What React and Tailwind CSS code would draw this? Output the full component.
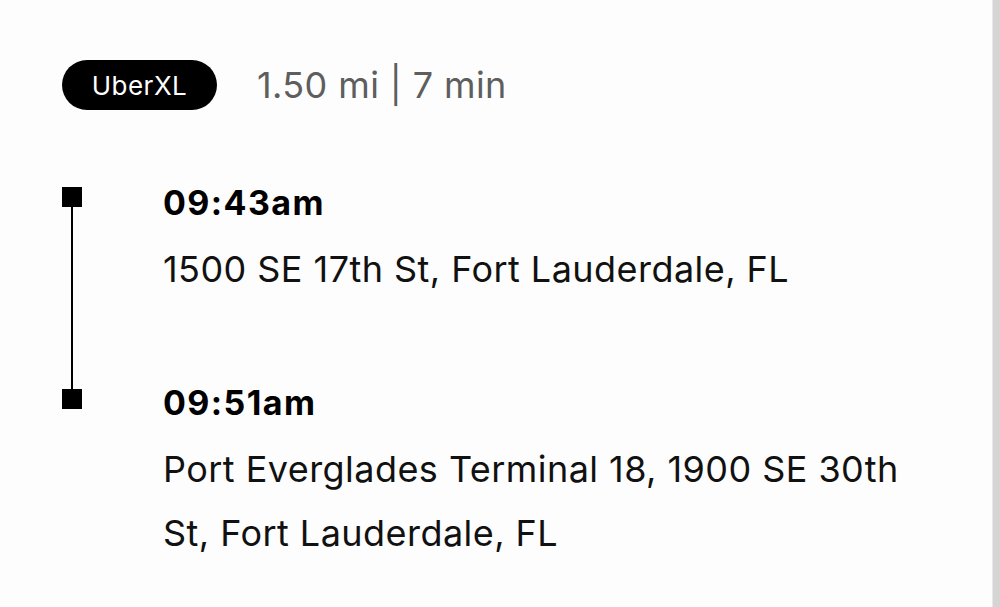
const stops = [
  { time: '09:43am', address: '1500 SE 17th St, Fort Lauderdale, FL' },
  { time: '09:51am', address: 'Port Everglades Terminal 18, 1900 SE 30th St, Fort Lauderdale, FL' },
];

const App = () => {
  return (
    <div className="flex h-[607px] w-[1000px] bg-[#fdfdfd] font-['Inter',sans-serif] overflow-hidden">
      <div className="flex-1 pl-[62px] pt-[60px]">
        {/* ride type + trip length */}
        <div className="flex h-[50px] items-center gap-[40px]">
          <span className="flex h-[50px] w-[155px] items-center justify-center rounded-full bg-black text-[26px] tracking-[0.5px] text-white">
            UberXL
          </span>
          <span className="text-[36px] leading-[50px] tracking-[0.4px] text-[#5e5e5e]">1.50 mi | 7 min</span>
        </div>

        {/* pickup / dropoff */}
        <div className="mt-[73px] flex">
          <div className="flex w-[20px] flex-col items-center pt-[4px]">
            <div className="h-[20px] w-[20px] bg-black" />
            <div className="h-[182px] w-[2px] bg-black" />
            <div className="h-[20px] w-[20px] bg-black" />
          </div>
          <div className="ml-[81px] flex w-[745px] flex-col">
            {stops.map((stop, i) => (
              <div key={stop.time} className={i > 0 ? 'mt-[82px]' : ''}>
                <p className="text-[34px] font-bold leading-[40px] tracking-[1.4px] text-black">{stop.time}</p>
                <p className="mt-[14px] text-[36px] leading-[64px] tracking-[0.45px] text-[#111]">{stop.address}</p>
              </div>
            ))}
          </div>
        </div>
      </div>
      <div className="w-[8px] border-l border-[#e8e8e8] bg-[#d5d5d5]" />
    </div>
  );
};

export default App;
